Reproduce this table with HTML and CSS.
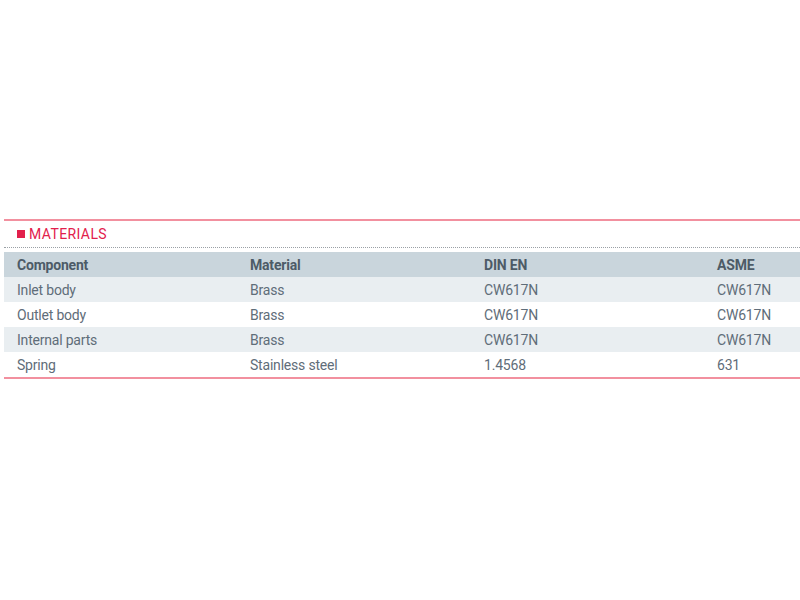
FILE: index.html
```html
<!DOCTYPE html>
<html>
<head>
<meta charset="utf-8">
<link rel="stylesheet" href="styles.css">
</head>
<body>
<section class="materials">
  <div class="title"><span class="square"></span><span class="title-text">MATERIALS</span></div>
  <div class="dots"></div>
  <div class="table">
    <div class="row head"><div>Component</div><div>Material</div><div>DIN EN</div><div>ASME</div></div>
    <div class="row shade"><div>Inlet body</div><div>Brass</div><div>CW617N</div><div>CW617N</div></div>
    <div class="row"><div>Outlet body</div><div>Brass</div><div>CW617N</div><div>CW617N</div></div>
    <div class="row shade"><div>Internal parts</div><div>Brass</div><div>CW617N</div><div>CW617N</div></div>
    <div class="row"><div>Spring</div><div>Stainless steel</div><div>1.4568</div><div>631</div></div>
  </div>
</section>
</body>
</html>
```

FILE: styles.css
```css
html, body {
  margin: 0;
  padding: 0;
  background: #ffffff;
  overflow: hidden;
}
body {
  font-family: "Roboto", "Liberation Sans", sans-serif;
}
.materials {
  margin: 219px 0 0 4px;
  width: 796px;
  border-top: 2px solid #f2909f;
}
.title {
  display: flex;
  align-items: center;
  height: 26px;
  padding-left: 13px;
}
.square {
  width: 8px;
  height: 8px;
  background: #e2204c;
  margin-right: 4px;
}
.title-text {
  color: #e2204c;
  font-size: 14px;
  letter-spacing: 0.4px;
}
.dots {
  border-top: 1px dotted #9aa0a5;
  margin-bottom: 4px;
}
.table {
  border-bottom: 2px solid #f2909f;
}
.row {
  display: grid;
  grid-template-columns: 233px 234px 233px 1fr;
  height: 25px;
  align-items: center;
  color: #5f6d79;
  font-size: 14px;
  letter-spacing: -0.2px;
}
.row > div {
  padding-left: 13px;
  padding-top: 1px;
}
.head {
  background: #c9d5dc;
  font-weight: bold;
  color: #4d5b67;
}
.shade {
  background: #e9eef1;
}
```
